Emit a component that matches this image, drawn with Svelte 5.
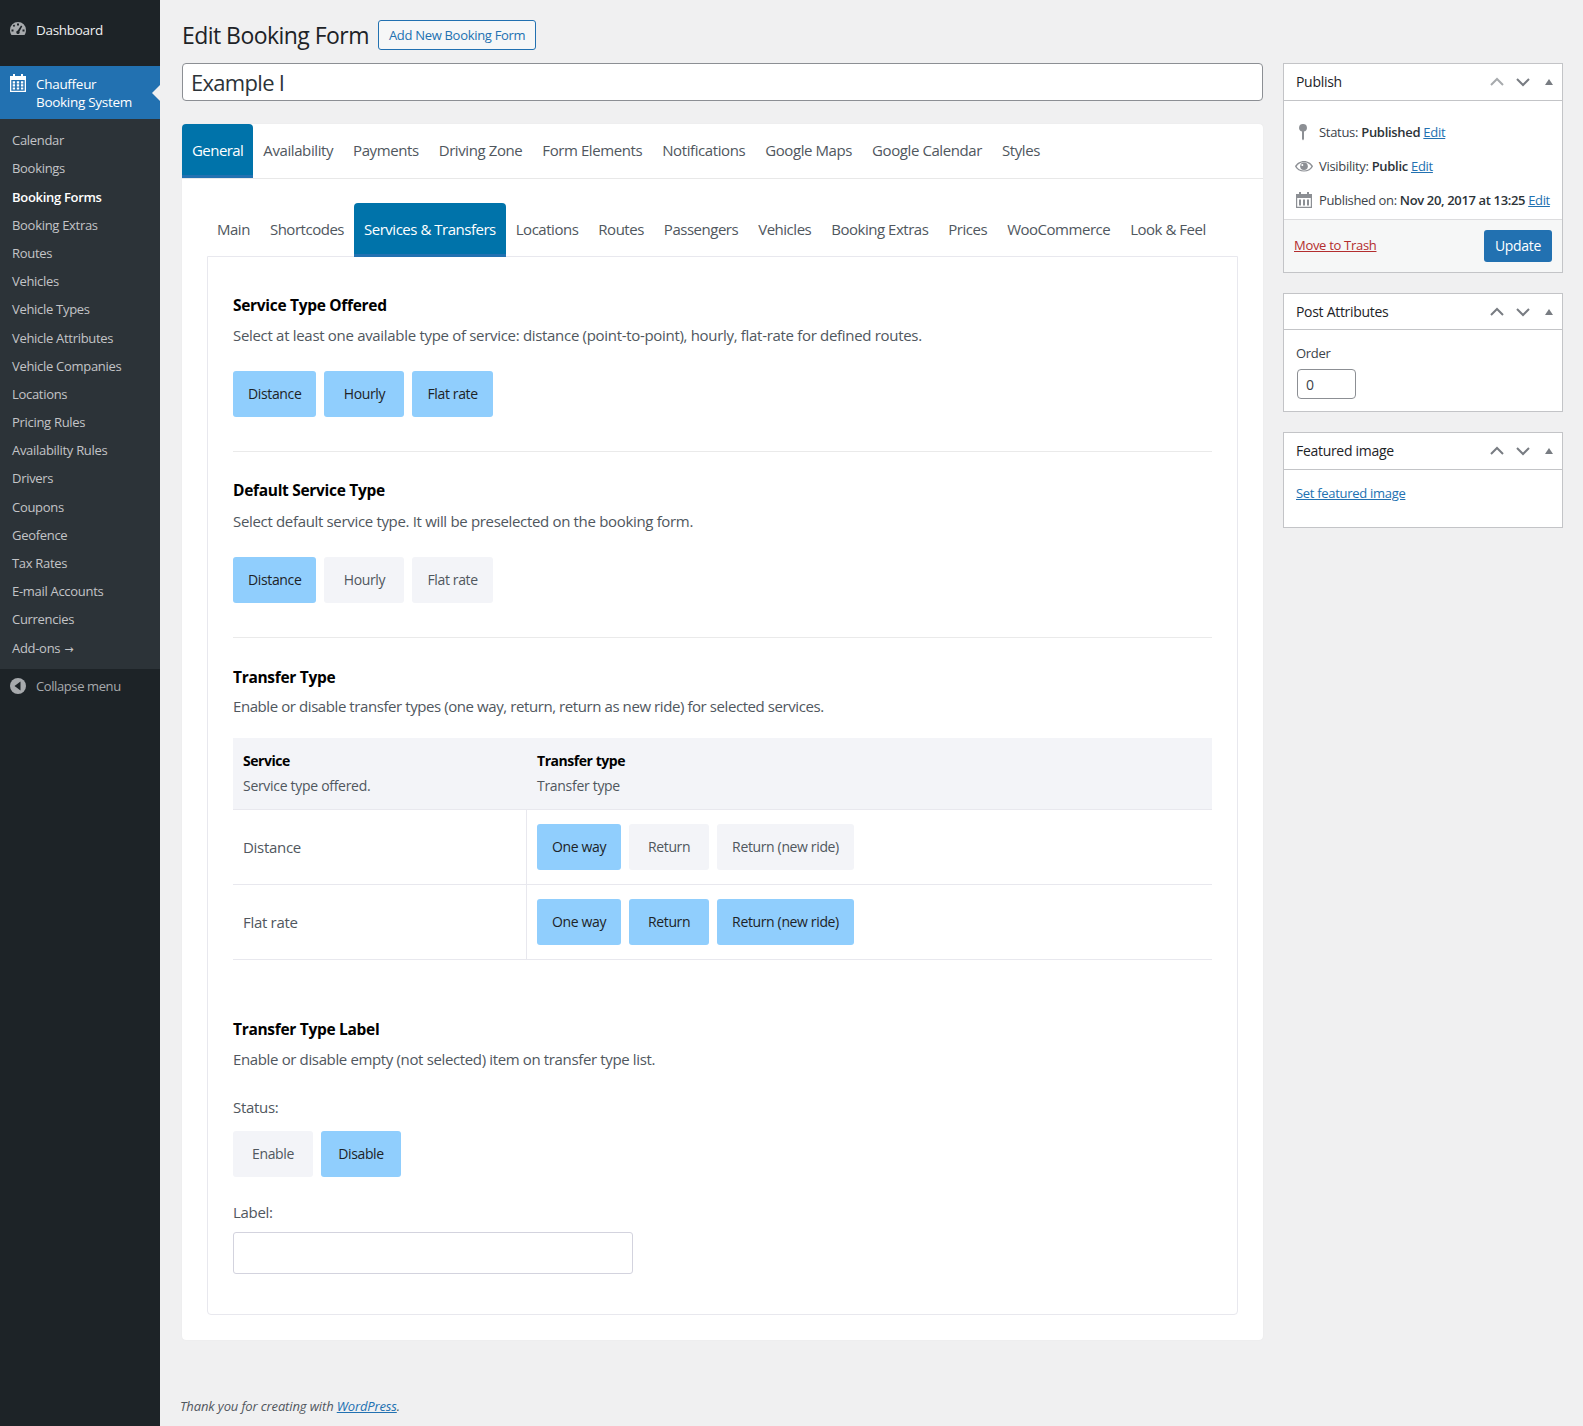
<script>
  const menu = ['Calendar','Bookings','Booking Forms','Booking Extras','Routes','Vehicles','Vehicle Types','Vehicle Attributes','Vehicle Companies','Locations','Pricing Rules','Availability Rules','Drivers','Coupons','Geofence','Tax Rates','E-mail Accounts','Currencies','Add-ons'];
  const tabs = ['General','Availability','Payments','Driving Zone','Form Elements','Notifications','Google Maps','Google Calendar','Styles'];
  const subtabs = ['Main','Shortcodes','Services & Transfers','Locations','Routes','Passengers','Vehicles','Booking Extras','Prices','WooCommerce','Look & Feel'];
</script>

{#snippet sw(label, on, cls = '')}
  <span class="sw {cls}" class:on>{label}</span>
{/snippet}

{#snippet ctl(dim = false)}
  <span class="ctl">
    <svg class:dim width="16" height="16" viewBox="0 0 16 16"><path d="M2 11l6-6 6 6" fill="none" stroke="currentColor" stroke-width="2"/></svg>
    <svg width="16" height="16" viewBox="0 0 16 16"><path d="M2 5l6 6 6-6" fill="none" stroke="currentColor" stroke-width="2"/></svg>
    <svg class="tri" width="10" height="8" viewBox="0 0 10 8"><path d="M5 1l4 6H1z" fill="currentColor"/></svg>
  </span>
{/snippet}

<div class="page">
  <aside class="side">
    <div class="dash">
      <svg class="mi" width="20" height="20" viewBox="0 0 20 20"><path fill="#a7aaad" fill-rule="evenodd" d="M9 2a8 8 0 0 0-8 8c0 2 .6 3.6 1.500 5h13c.9-1.400 1.500-3 1.500-5a8 8 0 0 0-8-8zM8 3.500h2v2H8zM3.800 5.500l1.400-1 1 1.400-1.400 1zM2.500 9.500h2v2h-2zM13.500 9.500h2v2h-2zM12 5.500l1.300.8-2.800 5.200a1.700 1.700 0 1 1-1.700-.9z"/></svg>
      <span>Dashboard</span>
    </div>
    <div class="cur">
      <svg class="mi up" width="20" height="20" viewBox="0 0 20 20"><path fill="#fff" fill-rule="evenodd" d="M1 2h3V0h2v2h6V0h2v2h3v16H1zM2.300 6v10.700h13.400V6zM3.700 7.200h2.400v2.200H3.700zM7.800 7.200h2.400v2.200H7.800zM11.900 7.200h2.400v2.200h-2.400zM3.700 10.300h2.400v2.200H3.700zM7.800 10.300h2.400v2.200H7.800zM11.900 10.300h2.400v2.200h-2.400zM3.700 13.400h2.400v2.200H3.700zM7.800 13.400h2.400v2.200H7.800zM11.900 13.400h2.400v2.200h-2.400z"/></svg>
      <span>Chauffeur<br />Booking System</span>
      <i class="arrow"></i>
    </div>
    <ul class="sub">
      {#each menu as m}<li class:bold={m === 'Booking Forms'}>{m}{#if m === 'Add-ons'}<span class="ar">→</span>{/if}</li>{/each}
    </ul>
    <div class="collapse">
      <svg class="mi" width="20" height="20" viewBox="0 0 20 20"><circle cx="9" cy="10" r="8" fill="#a7aaad"/><path d="M11.500 5.500v9L5.500 10z" fill="#1d2327"/></svg>
      <span>Collapse menu</span>
    </div>
  </aside>

  <main class="main">
    <div class="head">
      <h1>Edit Booking Form</h1>
      <span class="add">Add New Booking Form</span>
    </div>
    <div class="cols">
      <div class="left">
        <div class="title">Example I</div>
        <div class="card">
          <nav class="tabs">
            {#each tabs as t, i}<span class="tab" class:act={i === 0}>{t}</span>{/each}
          </nav>
          <div class="inner">
            <nav class="tabs2">
              {#each subtabs as t, i}<span class="tab" class:act={i === 2}>{t}</span>{/each}
            </nav>
            <div class="panel">
              <section class="sec s1">
                <h3>Service Type Offered</h3>
                <p>Select at least one available type of service: distance (point-to-point), hourly, flat-rate for defined routes.</p>
                <div class="btns">
                  {@render sw('Distance', true)}{@render sw('Hourly', true)}{@render sw('Flat rate', true)}
                </div>
              </section>
              <section class="sec s2">
                <h3>Default Service Type</h3>
                <p>Select default service type. It will be preselected on the booking form.</p>
                <div class="btns">
                  {@render sw('Distance', true)}{@render sw('Hourly', false)}{@render sw('Flat rate', false)}
                </div>
              </section>
              <section class="sec last">
                <h3>Transfer Type</h3>
                <p>Enable or disable transfer types (one way, return, return as new ride) for selected services.</p>
                <div class="tbl">
                  <div class="row thead">
                    <div class="c1"><b>Service</b><small>Service type offered.</small></div>
                    <div class="c2"><b>Transfer type</b><small>Transfer type</small></div>
                  </div>
                  <div class="row">
                    <div class="c1 name">Distance</div>
                    <div class="c2 btns">{@render sw('One way', true)}{@render sw('Return', false)}{@render sw('Return (new ride)', false)}</div>
                  </div>
                  <div class="row">
                    <div class="c1 name">Flat rate</div>
                    <div class="c2 btns">{@render sw('One way', true)}{@render sw('Return', true)}{@render sw('Return (new ride)', true)}</div>
                  </div>
                </div>
              </section>
              <section class="sec end">
                <h3>Transfer Type Label</h3>
                <p>Enable or disable empty (not selected) item on transfer type list.</p>
                <div class="lab">Status:</div>
                <div class="btns">{@render sw('Enable', false)}{@render sw('Disable', true)}</div>
                <div class="lab l2">Label:</div>
                <div class="txt"></div>
              </section>
            </div>
          </div>
        </div>
      </div>

      <div class="right">
        <div class="box">
          <div class="bh"><span>Publish</span>{@render ctl(true)}</div>
          <div class="pub">
            <div class="pl">
              <svg class="pi pin" width="20" height="20" viewBox="0 0 20 20"><path fill="#8c8f94" d="M10 2a3.800 3.800 0 0 1 1 7.500V17l-1 1.500L9 17V9.500A3.800 3.800 0 0 1 10 2z"/></svg>
              <span>Status: <b>Published</b> <a href="#e">Edit</a></span>
            </div>
            <div class="pl">
              <svg class="pi" width="20" height="20" viewBox="0 0 20 20"><path fill="#8c8f94" d="M10 5C6 5 2.500 7.300 1 10.500c1.500 3.100 5 5 9 5s7.500-1.900 9-5C17.500 7.300 14 5 10 5z"/><path fill="#fff" d="M10 6.200c-3 0-6 1.700-7.400 4.300 1.400 2.500 4.400 3.900 7.400 3.900s6-1.400 7.400-3.900C16 7.900 13 6.200 10 6.200z"/><circle cx="10" cy="10.300" r="3.800" fill="#8c8f94"/><circle cx="8.300" cy="8.900" r="1" fill="#fff"/></svg>
              <span>Visibility: <b>Public</b> <a href="#e">Edit</a></span>
            </div>
            <div class="pl tight">
              <svg class="pi" width="20" height="20" viewBox="0 0 20 20"><path fill="#8c8f94" fill-rule="evenodd" d="M5 2h2v2h6V2h2v2h3v14H2V4h3zM3.200 8v8.800h13.600V8zM5 9.500h2v6H5zM9 9.500h2v6H9zM13 9.500h2v6h-2z"/></svg>
              <span>Published on: <b>Nov 20, 2017 at 13:25</b> <a href="#e">Edit</a></span>
            </div>
          </div>
          <div class="pf"><a class="trash" href="#t">Move to Trash</a><span class="upd">Update</span></div>
        </div>
        <div class="box">
          <div class="bh short dark"><span>Post Attributes</span>{@render ctl()}</div>
          <div class="attr">
            <div class="ol">Order</div>
            <div class="num">0</div>
          </div>
        </div>
        <div class="box">
          <div class="bh dark"><span>Featured image</span>{@render ctl()}</div>
          <div class="feat"><a href="#f">Set featured image</a></div>
        </div>
      </div>
    </div>
    <footer class="foot"><i>Thank you for creating with <a href="#w">WordPress</a>.</i></footer>
  </main>
</div>

<style>
  :global(body) { margin: 0; background: #f0f0f1; }
  .page { display: flex; width: 1583px; height: 1426px; overflow: hidden; font-family: "Open Sans", sans-serif; font-size: 13px; color: #3c434a; letter-spacing: -0.3px; }
  a { color: #2271b1; }
  .side { width: 160px; flex: none; background: #1d2327; color: #f0f0f1; font-size: 13.5px; }
  .dash { height: 66px; box-sizing: border-box; padding-top: 20px; display: flex; gap: 9px; padding-left: 8px; line-height: 20px; }
  .cur { height: 53px; background: #2271b1; color: #fff; position: relative; display: flex; gap: 9px; padding: 9px 0 0 8px; box-sizing: border-box; line-height: 18px; }
  .mi { flex: none; margin-left: 1px; }
  .up { margin-top: -1px; }
  .dash span, .cur span, .collapse span { margin-left: -2px; }
  .arrow { position: absolute; right: 0; top: 19px; border: 8px solid transparent; border-left: 0; border-right-color: #f0f0f1; }
  .sub { margin: 0; padding: 7.200px 0 6.800px; list-style: none; background: #2c3338; }
  .sub li { height: 28.200px; line-height: 28px; padding-left: 12px; font-size: 13px; color: #c3c4c7; }
  .sub li.bold { color: #fff; font-weight: 600; }
  .ar { font-family: "DejaVu Sans", sans-serif; font-size: 11px; margin-left: 4px; letter-spacing: 0; }
  .collapse { display: flex; gap: 9px; padding: 7px 0 0 8px; line-height: 20px; color: #a7aaad; font-size: 13px; letter-spacing: -0.4px; }

  .main { flex: 1; min-width: 0; padding: 0 20px; position: relative; }
  .head { display: flex; align-items: center; gap: 9px; height: 63px; padding-left: 2px; padding-top: 7px; box-sizing: border-box; }
  h1 { margin: 0; font-size: 23px; font-weight: 400; color: #1d2327; letter-spacing: -0.55px; }
  .add { border: 1px solid #2271b1; background: #f6f7f7; color: #2271b1; border-radius: 3px; padding: 0 10px; line-height: 28px; font-size: 13px; }
  .cols { display: flex; gap: 20px; padding-left: 2px; }
  .left { width: 1081px; flex: none; }
  .title { height: 38px; box-sizing: border-box; border: 1px solid #8c8f94; border-radius: 4px; background: #fff; font-size: 22px; line-height: 36px; padding-left: 8px; color: #2c3338; letter-spacing: -0.7px; }
  .card { margin-top: 23px; background: #fff; border-radius: 4px; box-shadow: 0 0 1px #dcdcde; }
  .tabs { display: flex; height: 54px; border-bottom: 1px solid #e8e8e8; letter-spacing: -0.41px; }
  .tab { padding: 0 10px; font-size: 15px; line-height: 53px; color: #50575e; height: 54px; box-sizing: border-box; }
  .tab.act { background: #0073aa; color: #fff; border-radius: 4px 4px 0 0; border-bottom: 3px solid #2271b1; }
  .tabs .tab.act { letter-spacing: -0.55px; }
  .inner { padding: 24px 25px 25px; }
  .tabs2 { display: flex; height: 54px; position: relative; z-index: 1; letter-spacing: -0.48px; }
  .tabs2 .tab { line-height: 52px; }
  .panel { border: 1px solid #e8e8ee; border-radius: 0 0 4px 4px; padding: 36px 25px 40px; margin-top: -1px; }
  .sec { border-bottom: 1px solid #eaeaea; padding-bottom: 34px; margin-bottom: 26px; }
  .sec.s2 { margin-bottom: 27px; }
  .sec.last, .sec.end { border-bottom: 0; }
  .sec.last { padding-bottom: 57px; margin-bottom: 0; }
  .sec.end { padding-bottom: 0; margin-bottom: 0; }
  h3 { margin: 0; font-size: 15.500px; line-height: 24px; color: #000; font-weight: 700; }
  p { margin: 6px 0 0; font-size: 15px; line-height: 24px; color: #50575e; }
  .s1 p { letter-spacing: -0.31px; }
  .s2 p { margin-top: 7px; letter-spacing: -0.33px; }
  .last p { margin-top: 5px; letter-spacing: -0.42px; }
  .end p { margin-top: 6px; letter-spacing: -0.36px; }
  .btns { display: flex; gap: 8px; }
  .sec > .btns { margin-top: 24px; }
  .sw { height: 46px; line-height: 46px; padding: 0 15px; min-width: 80px; text-align: center; border-radius: 3px; background: #f3f4f8; color: #50575e; font-size: 14px; box-sizing: border-box; letter-spacing: -0.36px; }
  .sw.on { background: #90cefd; color: #1d2327; }
  .tbl { margin-top: 20px; }
  .row { display: flex; border-bottom: 1px solid #e8e8ee; height: 75px; box-sizing: border-box; }
  .thead { background: #f3f4f8; height: 72px; }
  .c1 { width: 294px; flex: none; box-sizing: border-box; padding-left: 10px; }
  .c2 { flex: 1; padding: 14px 0 0 10px; box-sizing: border-box; }
  .row:not(.thead) .c1 { border-right: 1px solid #e8e8ee; }
  .thead .c1, .thead .c2 { padding-top: 12px; }
  .thead b { display: block; font-size: 14px; line-height: 22px; color: #000; font-weight: 700; letter-spacing: -0.45px; }
  .thead small { display: block; font-size: 14px; line-height: 27px; color: #50575e; }
  .name { font-size: 15px; line-height: 75px; color: #50575e; }
  .lab { font-size: 15px; line-height: 24px; margin-top: 24px; color: #50575e; }
  .sec > .lab + .btns { margin-top: 12px; }
  .l2 { margin-top: 23px; }
  .txt { margin-top: 8px; width: 400px; height: 42px; box-sizing: border-box; border: 1px solid #d3d3de; border-radius: 3px; background: #fff; }
  .right { width: 280px; flex: none; }
  .box { border: 1px solid #c3c4c7; background: #fff; margin-bottom: 20px; box-sizing: border-box; }
  .bh { height: 37px; border-bottom: 1px solid #c3c4c7; display: flex; align-items: center; justify-content: space-between; padding: 0 0 1px 12px; font-size: 14px; font-weight: 400; color: #1d2327; box-sizing: border-box; }
  .bh.short { height: 36px; padding-bottom: 0; }
  .bh.dark { font-weight: 500; }
  .ctl { display: flex; align-items: center; gap: 10px; padding-right: 8px; color: #787c82; }
  .ctl .dim { color: #a7aaad; }
  .tri { margin-left: 3px; }
  .pub { padding: 14px 10px 4px; height: 118px; box-sizing: border-box; }
  .pl { display: flex; align-items: center; height: 34px; gap: 5px; font-size: 13px; }
  .pl.tight { letter-spacing: -0.35px; }
  .pi { flex: none; }
  .pin { margin-left: -1px; margin-right: 1px; }
  .pl b { font-weight: 600; color: #2c3338; }
  .pf { background: #f6f7f7; border-top: 1px solid #dcdcde; height: 53px; box-sizing: border-box; display: flex; align-items: center; justify-content: space-between; padding: 0 10px; }
  .trash { color: #b32d2e; font-size: 13px; margin-top: -2px; }
  .upd { background: #2271b1; color: #fff; border-radius: 3px; width: 68px; height: 32px; line-height: 32px; text-align: center; font-size: 14px; }
  .attr { padding: 13px 12px 0; height: 81px; box-sizing: border-box; }
  .ol { line-height: 20px; font-size: 13px; }
  .num { margin-top: 6px; margin-left: 1px; width: 59px; height: 30px; line-height: 30px; border: 1px solid #8c8f94; border-radius: 4px; box-sizing: border-box; padding-left: 8px; font-size: 14px; }
  .feat { padding: 13px 12px 0; height: 57px; box-sizing: border-box; font-size: 13px; line-height: 20px; }
  .foot { position: absolute; left: 20px; top: 1396px; font-size: 13px; line-height: 20px; color: #50575e; letter-spacing: -0.13px; }
</style>
